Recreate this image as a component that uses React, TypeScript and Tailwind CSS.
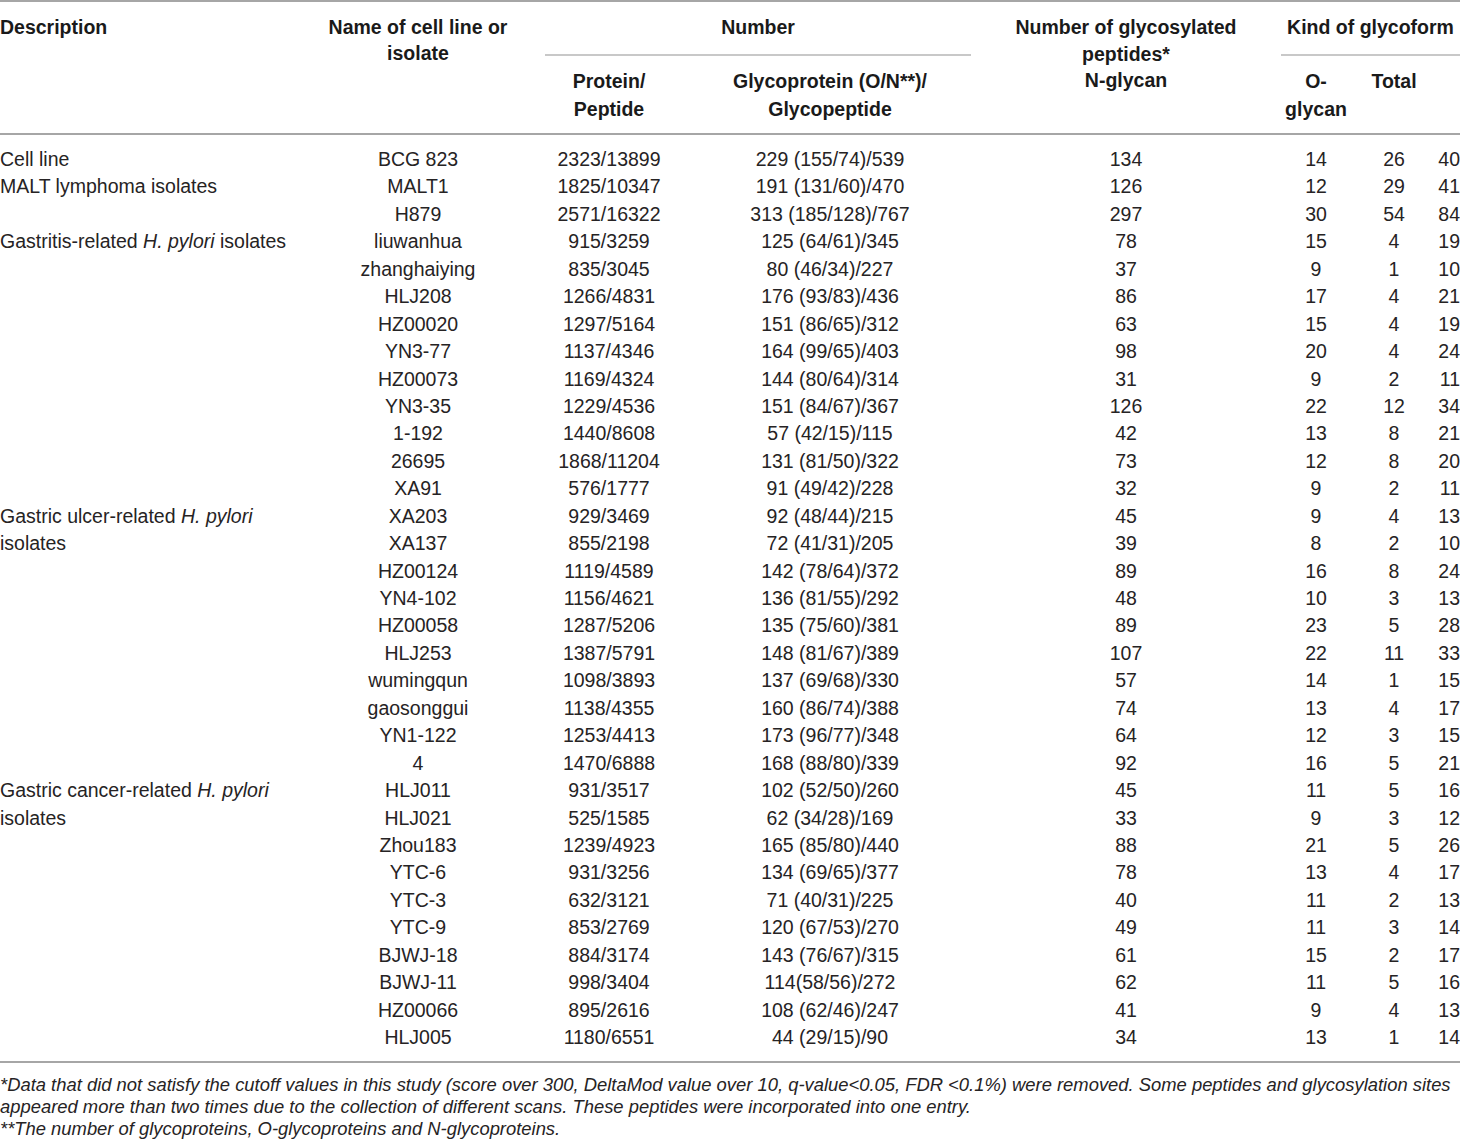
import React from 'react'

type Row = [string, string, string, string, string, string, string]

const groups: { label: React.ReactNode; rows: Row[] }[] = [
  {
    label: 'Cell line',
    rows: [['BCG 823', '2323/13899', '229 (155/74)/539', '134', '14', '26', '40']],
  },
  {
    label: 'MALT lymphoma isolates',
    rows: [
      ['MALT1', '1825/10347', '191 (131/60)/470', '126', '12', '29', '41'],
      ['H879', '2571/16322', '313 (185/128)/767', '297', '30', '54', '84'],
    ],
  },
  {
    label: (
      <>
        Gastritis-related <i>H. pylori</i> isolates
      </>
    ),
    rows: [
      ['liuwanhua', '915/3259', '125 (64/61)/345', '78', '15', '4', '19'],
      ['zhanghaiying', '835/3045', '80 (46/34)/227', '37', '9', '1', '10'],
      ['HLJ208', '1266/4831', '176 (93/83)/436', '86', '17', '4', '21'],
      ['HZ00020', '1297/5164', '151 (86/65)/312', '63', '15', '4', '19'],
      ['YN3-77', '1137/4346', '164 (99/65)/403', '98', '20', '4', '24'],
      ['HZ00073', '1169/4324', '144 (80/64)/314', '31', '9', '2', '11'],
      ['YN3-35', '1229/4536', '151 (84/67)/367', '126', '22', '12', '34'],
      ['1-192', '1440/8608', '57 (42/15)/115', '42', '13', '8', '21'],
      ['26695', '1868/11204', '131 (81/50)/322', '73', '12', '8', '20'],
      ['XA91', '576/1777', '91 (49/42)/228', '32', '9', '2', '11'],
    ],
  },
  {
    label: (
      <>
        Gastric ulcer-related <i>H. pylori</i>
        <br />
        isolates
      </>
    ),
    rows: [
      ['XA203', '929/3469', '92 (48/44)/215', '45', '9', '4', '13'],
      ['XA137', '855/2198', '72 (41/31)/205', '39', '8', '2', '10'],
      ['HZ00124', '1119/4589', '142 (78/64)/372', '89', '16', '8', '24'],
      ['YN4-102', '1156/4621', '136 (81/55)/292', '48', '10', '3', '13'],
      ['HZ00058', '1287/5206', '135 (75/60)/381', '89', '23', '5', '28'],
      ['HLJ253', '1387/5791', '148 (81/67)/389', '107', '22', '11', '33'],
      ['wumingqun', '1098/3893', '137 (69/68)/330', '57', '14', '1', '15'],
      ['gaosonggui', '1138/4355', '160 (86/74)/388', '74', '13', '4', '17'],
      ['YN1-122', '1253/4413', '173 (96/77)/348', '64', '12', '3', '15'],
      ['4', '1470/6888', '168 (88/80)/339', '92', '16', '5', '21'],
    ],
  },
  {
    label: (
      <>
        Gastric cancer-related <i>H. pylori</i>
        <br />
        isolates
      </>
    ),
    rows: [
      ['HLJ011', '931/3517', '102 (52/50)/260', '45', '11', '5', '16'],
      ['HLJ021', '525/1585', '62 (34/28)/169', '33', '9', '3', '12'],
      ['Zhou183', '1239/4923', '165 (85/80)/440', '88', '21', '5', '26'],
      ['YTC-6', '931/3256', '134 (69/65)/377', '78', '13', '4', '17'],
      ['YTC-3', '632/3121', '71 (40/31)/225', '40', '11', '2', '13'],
      ['YTC-9', '853/2769', '120 (67/53)/270', '49', '11', '3', '14'],
      ['BJWJ-18', '884/3174', '143 (76/67)/315', '61', '15', '2', '17'],
      ['BJWJ-11', '998/3404', '114(58/56)/272', '62', '11', '5', '16'],
      ['HZ00066', '895/2616', '108 (62/46)/247', '41', '9', '4', '13'],
      ['HLJ005', '1180/6551', '44 (29/15)/90', '34', '13', '1', '14'],
    ],
  },
]

const App = () => {
  return (
    <div className="w-[1460px] h-[1144px] bg-white text-[#262324] font-['Liberation_Sans',Arial,sans-serif]">
      <table className="w-[1460px] table-fixed border-collapse">
        <colgroup>
          <col className="w-[307px]" />
          <col className="w-[222px]" />
          <col className="w-[160px]" />
          <col className="w-[282px]" />
          <col className="w-[310px]" />
          <col className="w-[70px]" />
          <col className="w-[86px]" />
          <col className="w-[23px]" />
        </colgroup>
        <thead className="text-[19.5px] font-bold leading-[27px] text-[#1a1a1a]">
          <tr className="border-t-2 border-[#a6a6a6]">
            <th rowSpan={2} className="align-top text-left font-bold pt-[12px] px-0">
              Description
            </th>
            <th rowSpan={2} className="align-top text-center font-bold pt-[12px] px-0 leading-[26px]">
              Name of cell line or
              <br />
              isolate
            </th>
            <th colSpan={2} className="align-top text-center font-bold pt-[12px] pb-0 px-0">
              <div className="ml-4 pb-[13px] border-b-2 border-[#c8c8c8]">Number</div>
            </th>
            <th rowSpan={2} className="align-top text-center font-bold pt-[12px] px-0 leading-[26.5px]">
              Number of glycosylated
              <br />
              peptides*
              <br />
              N-glycan
            </th>
            <th colSpan={3} className="align-top text-center font-bold pt-[12px] pb-0 px-0">
              <div className="pb-[13px] border-b-2 border-[#c8c8c8]">Kind of glycoform</div>
            </th>
          </tr>
          <tr className="border-b-2 border-[#a6a6a6]">
            <th className="align-top text-center font-bold pt-[11px] pb-[10px] px-0 leading-[28px]">
              Protein/
              <br />
              Peptide
            </th>
            <th className="align-top text-center font-bold pt-[11px] pb-[10px] px-0 leading-[28px]">
              Glycoprotein (O/N**)/
              <br />
              Glycopeptide
            </th>
            <th className="align-top text-center font-bold pt-[11px] pb-[10px] px-0 leading-[28px]">
              O-
              <br />
              glycan
            </th>
            <th className="align-top text-center font-bold pt-[11px] pb-[10px] px-0 leading-[28px]">Total</th>
            <th className="pt-[11px] pb-[10px] px-0" />
          </tr>
        </thead>
        <tbody className="text-[19.5px] font-normal leading-[27.44px]">
          <tr>
            <td colSpan={8} className="h-[12px] p-0" />
          </tr>
          {groups.map((g, gi) =>
            g.rows.map((r, ri) => (
              <tr key={`${gi}-${ri}`} className="h-[27.44px]">
                {ri === 0 && (
                  <td rowSpan={g.rows.length} className="align-top text-left p-0 whitespace-nowrap">
                    {g.label}
                  </td>
                )}
                <td className="text-center p-0 whitespace-nowrap">{r[0]}</td>
                <td className="text-center p-0 whitespace-nowrap">{r[1]}</td>
                <td className="text-center p-0 whitespace-nowrap">{r[2]}</td>
                <td className="text-center p-0 whitespace-nowrap">{r[3]}</td>
                <td className="text-center p-0 whitespace-nowrap">{r[4]}</td>
                <td className="text-center p-0 whitespace-nowrap">{r[5]}</td>
                <td className="text-right p-0 whitespace-nowrap">{r[6]}</td>
              </tr>
            ))
          )}
          <tr className="border-b-2 border-[#a6a6a6]">
            <td colSpan={8} className="h-[11px] p-0" />
          </tr>
        </tbody>
      </table>
      <div className="pt-[11px] text-[18.4px] italic leading-[22px] whitespace-nowrap">
        <p>
          *Data that did not satisfy the cutoff values in this study (score over 300, DeltaMod value over 10,
          q-value&lt;0.05, FDR &lt;0.1%) were removed. Some peptides and glycosylation sites
        </p>
        <p>
          appeared more than two times due to the collection of different scans. These peptides were incorporated
          into one entry.
        </p>
        <p>**The number of glycoproteins, O-glycoproteins and N-glycoproteins.</p>
      </div>
    </div>
  )
}

export default App
